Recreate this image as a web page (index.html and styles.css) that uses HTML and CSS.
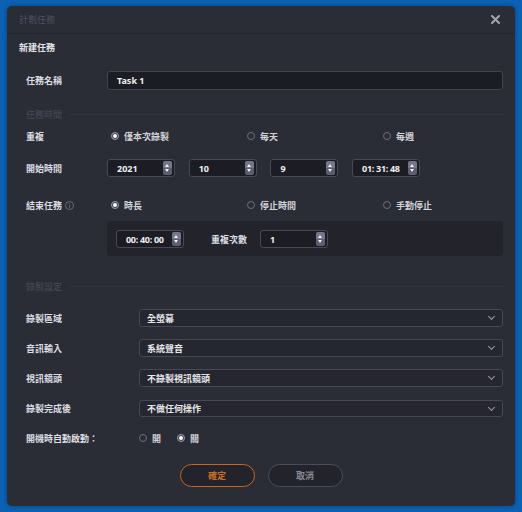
FILE: index.html
```html
<!DOCTYPE html>
<html lang="zh-Hant">
<head>
<meta charset="utf-8">
<title>計劃任務</title>
<link rel="stylesheet" href="styles.css">
</head>
<body>
<div class="dialog">
  <div class="titlebar">
    <span class="title">計劃任務</span>
    <svg class="close" width="9" height="9" viewBox="0 0 9 9"><path d="M1 1L8 8M8 1L1 8" stroke="#a4a6b4" stroke-width="2" stroke-linecap="round"/></svg>
  </div>
  <div class="content">
    <div class="newtask">新建任務</div>

    <div class="row r-name">
      <span class="lbl">任務名稱</span>
      <div class="input">Task 1</div>
    </div>

    <div class="section s-time"><span>任務時間</span><i class="rule"></i></div>

    <div class="row r-repeat">
      <span class="lbl">重複</span>
      <div class="radios3">
        <label class="radio"><i class="dot on"></i>僅本次錄製</label>
        <label class="radio"><i class="dot"></i>每天</label>
        <label class="radio"><i class="dot"></i>每週</label>
      </div>
    </div>

    <div class="row r-start">
      <span class="lbl">開始時間</span>
      <div class="spins">
        <div class="spin"><span class="val">2021</span><span class="arr"></span></div>
        <div class="spin"><span class="val">10</span><span class="arr"></span></div>
        <div class="spin"><span class="val">9</span><span class="arr"></span></div>
        <div class="spin"><span class="val tight">01: 31: 48</span><span class="arr"></span></div>
      </div>
    </div>

    <div class="row r-end">
      <span class="lbl">結束任務
        <svg class="info" width="9" height="9" viewBox="0 0 9 9"><circle cx="4.5" cy="4.5" r="4" fill="none" stroke="#6e707e" stroke-width="0.9"/><path d="M4.5 4v2.7" stroke="#6e707e" stroke-width="0.9"/><circle cx="4.5" cy="2.6" r="0.55" fill="#6e707e"/></svg>
      </span>
      <div class="radios3">
        <label class="radio"><i class="dot on"></i>時長</label>
        <label class="radio"><i class="dot"></i>停止時間</label>
        <label class="radio"><i class="dot"></i>手動停止</label>
      </div>
    </div>

    <div class="row r-panel">
      <span class="lbl"></span>
      <div class="panel">
        <div class="spin"><span class="val tight">00: 40: 00</span><span class="arr"></span></div>
        <span class="plabel">重複次數</span>
        <div class="spin"><span class="val">1</span><span class="arr"></span></div>
      </div>
    </div>

    <div class="section s-rec"><span>錄製設定</span><i class="rule"></i></div>

    <div class="row r-sel first">
      <span class="lbl wide">錄製區域</span>
      <div class="select">全螢幕<span class="chev"></span></div>
    </div>
    <div class="row r-sel">
      <span class="lbl wide">音訊輸入</span>
      <div class="select">系統聲音<span class="chev"></span></div>
    </div>
    <div class="row r-sel">
      <span class="lbl wide">視訊鏡頭</span>
      <div class="select">不錄製視訊鏡頭<span class="chev"></span></div>
    </div>
    <div class="row r-sel last">
      <span class="lbl wide">錄製完成後</span>
      <div class="select">不做任何操作<span class="chev"></span></div>
    </div>

    <div class="row r-boot">
      <span class="lbl wide">開機時自動啟動：</span>
      <div class="radios2">
        <label class="radio"><i class="dot"></i>開</label>
        <label class="radio"><i class="dot on"></i>關</label>
      </div>
    </div>
  </div>
  <div class="buttons">
    <button class="btn ok">確定</button>
    <button class="btn cancel">取消</button>
  </div>
</div>
</body>
</html>
```

FILE: styles.css
```css
html, body {
  margin: 0;
  padding: 0;
}
body {
  width: 522px;
  height: 512px;
  overflow: hidden;
  background: #0b61b3;
  font-family: "Noto Sans", "Noto Sans CJK TC", sans-serif;
  font-size: 9px;
  color: #dcdde2;
}
.dialog {
  margin: 6px 0 0 7px;
  width: 508px;
  height: 500px;
  background: #2a2c36;
  border-radius: 5px;
  box-shadow: 0 0 4px rgba(0, 0, 0, 0.35);
  position: relative;
}
.titlebar {
  height: 28px;
  box-sizing: border-box;
  display: flex;
  align-items: center;
  justify-content: space-between;
  padding: 0 15px 0 12px;
  border-bottom: 1px solid #22232b;
}
.title {
  color: #4f5161;
  font-size: 9px;
}
.close {
  display: block;
}
.content {
  padding: 0 12px 0 19px;
}
.newtask {
  margin: 4px 0 0 -7px;
  height: 20px;
  line-height: 20px;
  font-weight: 700;
  color: #e4e5ea;
}
.row {
  display: flex;
  align-items: center;
}
.lbl {
  width: 81px;
  flex: none;
  font-weight: 700;
  color: #dcdde2;
  display: flex;
  align-items: center;
}
.lbl.wide {
  width: 113px;
}
.r-name {
  margin-top: 13px;
  height: 19px;
}
.input {
  flex: 1;
  height: 19px;
  box-sizing: border-box;
  background: #1c1d24;
  border: 1px solid #41434f;
  border-radius: 3px;
  padding-left: 9px;
  line-height: 17px;
  font-weight: 700;
  color: #f0f0f2;
}
.section {
  display: flex;
  align-items: center;
  height: 12px;
  color: #4b4d5a;
}
.section span {
  flex: none;
  width: 44px;
}
.section .rule {
  flex: 1;
  height: 1px;
  background: #33353f;
}
.s-time {
  margin-top: 18px;
}
.s-rec {
  margin-top: 24px;
}
.r-repeat {
  margin-top: 8px;
  height: 16px;
}
.radios3 {
  display: grid;
  grid-template-columns: 136px 136px 1fr;
  padding-left: 4px;
}
.radio {
  display: flex;
  align-items: center;
  color: #d2d3d9;
  font-weight: 700;
}
.dot {
  width: 8px;
  height: 8px;
  box-sizing: border-box;
  border: 1px solid #6c6e7c;
  border-radius: 50%;
  margin-right: 5px;
  flex: none;
  position: relative;
}
.dot.on {
  border-color: #9c9eab;
  background: #3a3c48;
}
.dot.on::after {
  content: "";
  position: absolute;
  left: 1px;
  top: 1px;
  width: 4px;
  height: 4px;
  border-radius: 50%;
  background: #ffffff;
}
.r-start {
  margin-top: 15px;
  height: 18px;
}
.spins {
  display: flex;
  gap: 13.7px;
}
.spin {
  width: 68px;
  height: 18px;
  box-sizing: border-box;
  background: #1c1d24;
  border: 1px solid #474956;
  border-radius: 3px;
  display: flex;
  align-items: center;
  justify-content: space-between;
  padding: 0 1px 0 9px;
}
.val {
  font-weight: 700;
  color: #f0f0f2;
}
.val.tight {
  letter-spacing: -0.3px;
}
.arr {
  width: 9px;
  height: 14px;
  border-radius: 2px;
  background:
    linear-gradient(to bottom, #74768c 0, #74768c 50%, #5c5e70 50%, #5c5e70 100%);
  position: relative;
  margin-right: 1px;
}
.arr::before,
.arr::after {
  content: "";
  position: absolute;
  left: 2px;
  width: 0;
  height: 0;
  border-left: 2.5px solid transparent;
  border-right: 2.5px solid transparent;
}
.arr::before {
  top: 3px;
  border-bottom: 3px solid #f2f2f4;
}
.arr::after {
  bottom: 3px;
  border-top: 3px solid #f2f2f4;
}
.r-end {
  margin-top: 20px;
  height: 16px;
}
.info {
  display: block;
  margin-left: 3px;
}
.r-panel {
  margin-top: 8px;
}
.panel {
  flex: 1;
  height: 35px;
  box-sizing: border-box;
  background: #22232b;
  border-radius: 4px;
  display: flex;
  align-items: center;
  padding: 1px 0 0 9px;
}
.plabel {
  margin: 0 13px 0 27px;
  font-weight: 700;
  color: #dcdde2;
}
.r-sel {
  height: 18px;
  margin-top: 12px;
}
.r-sel.first {
  margin-top: 17px;
}
.r-sel.last {
  margin-top: 13px;
  height: 17px;
}
.select {
  flex: 1;
  height: 100%;
  box-sizing: border-box;
  background: #25262f;
  border: 1px solid #464857;
  border-radius: 3px;
  display: flex;
  align-items: center;
  justify-content: space-between;
  padding: 0 7px 0 7px;
  color: #e6e7eb;
  font-weight: 700;
}
.chev {
  width: 4px;
  height: 4px;
  border-right: 1px solid #9a9cab;
  border-bottom: 1px solid #9a9cab;
  transform: rotate(45deg);
  margin-top: -3px;
  margin-right: 1px;
}
.r-boot {
  margin-top: 13px;
  height: 16px;
}
.radios2 {
  display: flex;
  gap: 16px;
}
.buttons {
  display: flex;
  justify-content: center;
  gap: 13px;
  margin-top: 18px;
}
.btn {
  width: 75px;
  height: 23px;
  border-radius: 12px;
  background: #22232b;
  font-family: "Noto Sans CJK TC", sans-serif;
  font-size: 9px;
  font-weight: 700;
  padding: 0;
  cursor: pointer;
}
.btn.ok {
  border: 1px solid #c8661f;
  color: #c86e2a;
}
.btn.cancel {
  border: 1px solid #4a4c59;
  color: #8a8c99;
}
```
